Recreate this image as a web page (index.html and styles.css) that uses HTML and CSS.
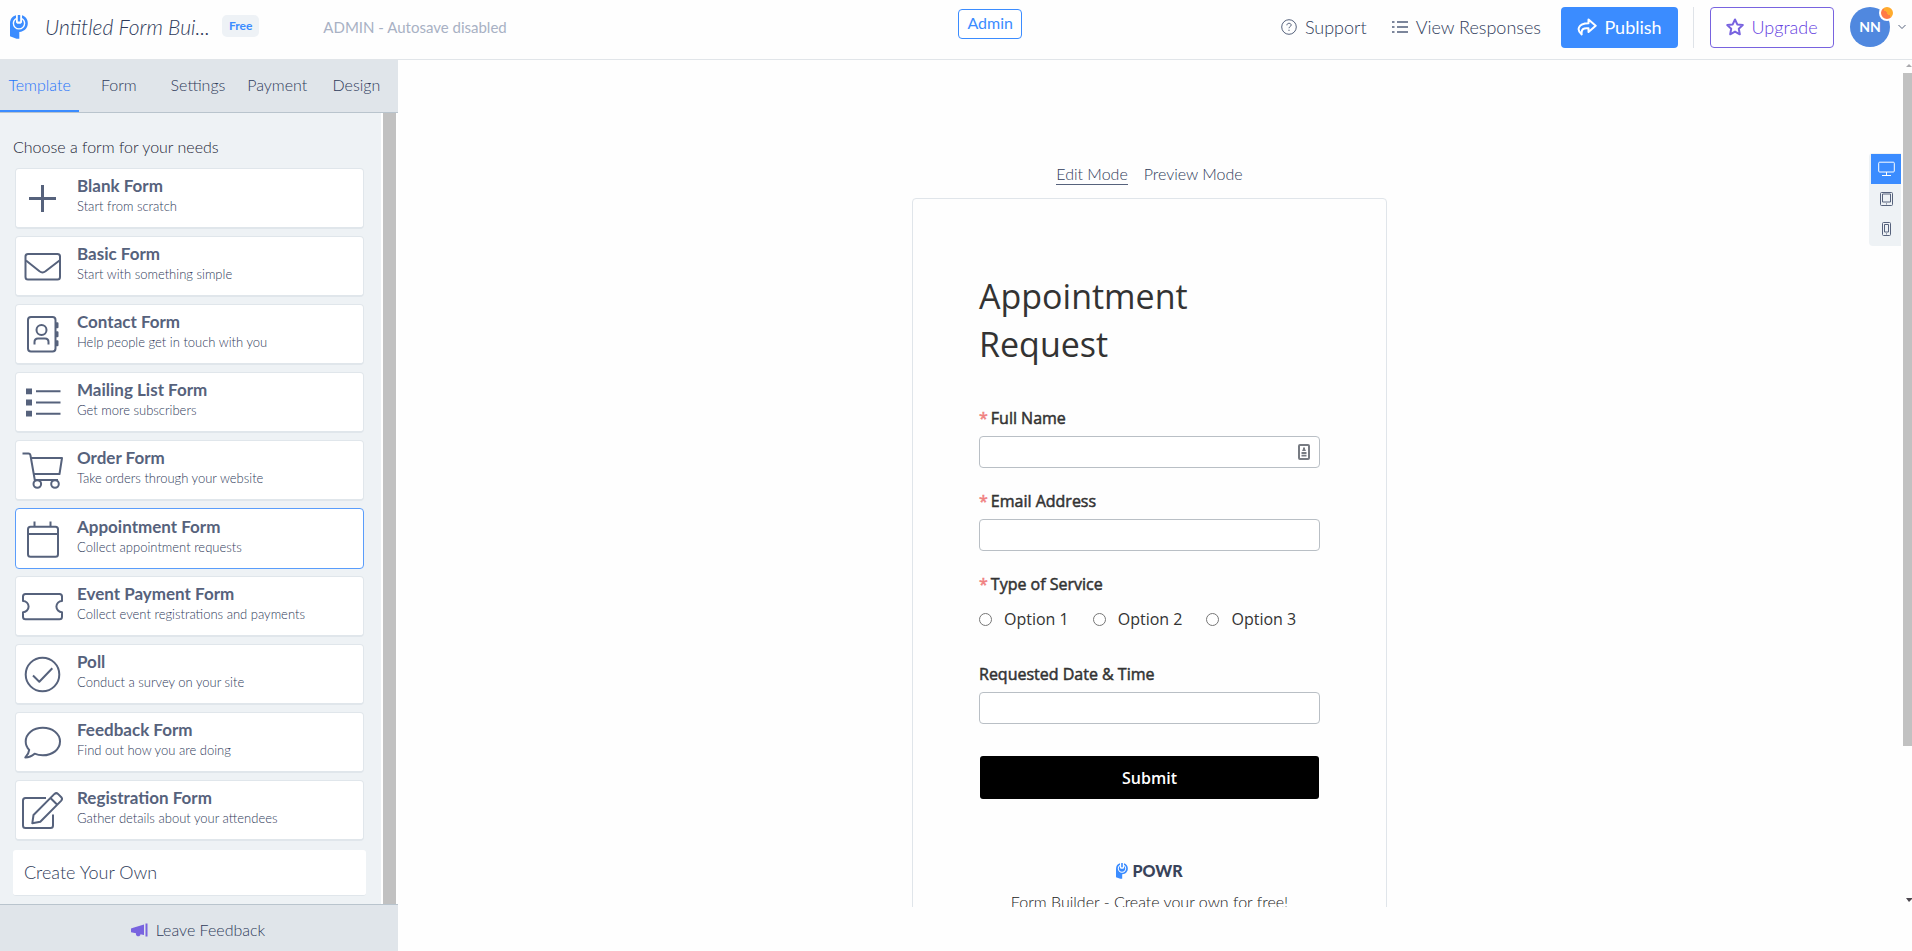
FILE: index.html
```html
<!DOCTYPE html>
<html lang="en">
<head>
<meta charset="utf-8">
<title>Form Builder</title>
<link rel="stylesheet" href="styles.css">
</head>
<body>
<svg class="sprite" aria-hidden="true">
  <symbol id="powr" viewBox="0 0 18 24">
    <path fill="#3b8cff" d="M0 8.500C0 4 2.500 1.200 6 .3V3C3.800 4 2.700 6 2.700 8.300A6.300 6.300 0 0 0 15.300 8.300C15.300 6 14.200 4 12 3V.3C15.600 1.300 17.800 4.500 17.800 8.300C17.800 12.800 14.500 16.600 9.300 17V23.700H6.500L0 21.300Z"/>
    <path fill="#3b8cff" d="M7.800 0H10.200V6.500H7.800ZM6 4.500V7.500L7.300 8.700H10.700L12 7.500V4.500A4.900 4.900 0 1 1 6 4.500Z"/>
  </symbol>
</svg>

<header class="topbar">
  <div class="topbar-left">
    <a class="logo" href="#" aria-label="POWR"><svg class="logo-mark"><use href="#powr"/></svg></a>
    <h1 class="form-name">Untitled Form Bui...</h1>
    <span class="plan">Free</span>
    <span class="autosave">ADMIN - Autosave disabled</span>
  </div>
  <button class="admin" type="button">Admin</button>
  <div class="topbar-right">
    <a class="top-link" href="#"><svg class="icon16" viewBox="0 0 16 16"><circle cx="8" cy="8" r="7.300"/><path d="M5.900 6.300C5.900 5 6.800 4.300 8 4.300S10.200 5 10.200 6.100C10.200 7.500 8 7.600 8 9.200"/><path d="M8 10.700V12"/></svg>Support</a>
    <a class="top-link" href="#"><svg class="icon16 thick" viewBox="0 0 16 16"><path d="M5 3H16M5 8H16M5 13H16M0 3H2.500M0 8H2.500M0 13H2.500"/></svg>View Responses</a>
    <button class="publish" type="button"><svg class="icon20" viewBox="0 0 20 18"><path d="M11.500 1.500L18.700 7.800L11.500 14V10.300C6.500 9.800 4 11 4.700 16.500C-.5 12 .5 5.500 11.500 5.300Z"/></svg>Publish</button>
    <span class="divider"></span>
    <button class="upgrade" type="button"><svg class="icon18" viewBox="0 0 18 18"><path d="M9 1.500L11.300 6.400L16.800 7.100L12.800 10.800L13.800 16.300L9 13.600L4.200 16.300L5.200 10.800L1.200 7.100L6.700 6.400Z"/></svg>Upgrade</button>
    <button class="account" type="button"><span class="avatar">NN<i class="dot"></i></span><svg class="chevron" viewBox="0 0 8 6"><path d="M.5 1L4 4.500L7.500 1"/></svg></button>
  </div>
</header>

<div class="workspace">
  <aside class="sidebar">
    <nav class="tabs">
      <a class="tab active" href="#">Template</a>
      <a class="tab" href="#">Form</a>
      <a class="tab" href="#">Settings</a>
      <a class="tab" href="#">Payment</a>
      <a class="tab" href="#">Design</a>
    </nav>
    <div class="side-body">
      <div class="templates">
        <h2 class="choose">Choose a form for your needs</h2>
        <div class="cards">
          <button class="card" type="button"><svg class="card-icon" viewBox="0 0 40 40"><path class="heavy" d="M20.500 7V34M7 20.500H34"/></svg><span class="card-text"><b>Blank Form</b><small>Start from scratch</small></span></button>
          <button class="card" type="button"><svg class="card-icon" viewBox="0 0 40 40"><rect x="3.500" y="8" width="34.500" height="25.500" rx="2.500"/><path d="M4 14.500L17.500 25.300Q20.500 27.500 23.500 25.300L37.500 14.500"/></svg><span class="card-text"><b>Basic Form</b><small>Start with something simple</small></span></button>
          <button class="card" type="button"><svg class="card-icon" viewBox="0 0 40 40"><rect x="6" y="3" width="27.500" height="34.500" rx="3"/><path d="M34.500 9.300H35.500V13.300H34.500ZM34.500 18.300H35.500V22.300H34.500ZM34.500 27.300H35.500V31.300H34.500Z"/><circle cx="19.500" cy="16" r="5"/><path d="M12.500 30.500V28Q12.500 24.500 16 24.500H23Q26.500 24.500 26.500 28V30.500"/></svg><span class="card-text"><b>Contact Form</b><small>Help people get in touch with you</small></span></button>
          <button class="card" type="button"><svg class="card-icon" viewBox="0 0 40 40"><path d="M14 9.300H38.500M14 20.500H38.500M14 31.700H38.500"/><path class="solid" d="M4 6.500H10V12.300H4ZM4 17.600H10V23.400H4ZM4 28.800H10V34.600H4Z"/></svg><span class="card-text"><b>Mailing List Form</b><small>Get more subscribers</small></span></button>
          <button class="card" type="button"><svg class="card-icon" viewBox="0 0 40 40"><path d="M.5 3.500H6.500Q8 3.500 8.400 5L12.800 30H36M9 8H40L37.500 24H11.800"/><circle cx="15.300" cy="34" r="3.800"/><circle cx="33" cy="34" r="3.800"/></svg><span class="card-text"><b>Order Form</b><small>Take orders through your website</small></span></button>
          <button class="card selected" type="button"><svg class="card-icon" viewBox="0 0 40 40"><rect x="6" y="7.700" width="30" height="30" rx="2.500"/><path d="M6 15H36M12.500 2.500V7.500M28.500 2.500V7.500"/></svg><span class="card-text"><b>Appointment Form</b><small>Collect appointment requests</small></span></button>
          <button class="card" type="button"><svg class="card-icon" viewBox="0 0 40 40"><path d="M3.500 8H37.500Q40 8 40 10.500V15A5.600 5.600 0 0 0 40 26.200V30.700Q40 33.200 37.500 33.200H3.500Q1 33.200 1 30.700V26.200A5.600 5.600 0 0 0 1 15V10.500Q1 8 3.500 8Z"/></svg><span class="card-text"><b>Event Payment Form</b><small>Collect event registrations and payments</small></span></button>
          <button class="card" type="button"><svg class="card-icon" viewBox="0 0 40 40"><circle cx="20.500" cy="20.500" r="16.800"/><path d="M11 21.500L17.300 27.700L30.300 14.300"/></svg><span class="card-text"><b>Poll</b><small>Conduct a survey on your site</small></span></button>
          <button class="card" type="button"><svg class="card-icon" viewBox="0 0 40 40"><path d="M20.800 5.800C30.500 5.800 38 11.800 38 19.600S30.500 33.300 20.800 33.300C17.800 33.300 15 32.700 12.600 31.700C10 34 6.800 35.400 3.300 35.400C5.500 33.200 7 30.500 7.200 27.900C4.900 25.600 3.700 22.700 3.700 19.600C3.700 11.800 11.100 5.800 20.800 5.800Z"/></svg><span class="card-text"><b>Feedback Form</b><small>Find out how you are doing</small></span></button>
          <button class="card" type="button"><svg class="card-icon" viewBox="0 0 40 40"><path d="M24 8H3.500Q1 8 1 10.500V35.500Q1 38 3.500 38H28.500Q31 38 31 35.500V24.500"/><path d="M10.300 33.300L11.500 25L32.500 3.900Q34.300 2.300 36 3.900L39.300 7.200Q40.800 8.900 39.300 10.600L18.300 31.800ZM28.700 8.200L35 14.500"/></svg><span class="card-text"><b>Registration Form</b><small>Gather details about your attendees</small></span></button>
        </div>
        <button class="create" type="button">Create Your Own</button>
      </div>
      <div class="side-scroll"></div>
    </div>
    <a class="feedback" href="#"><svg class="horn" viewBox="0 0 17 14"><path fill="#7863df" d="M0 5.500L3 4.500L13 1.500V12L9.500 11.200C9.300 13 8 13.500 6.500 13.200C5.200 12.800 4.700 11.500 5 10.300L0 9.300ZM14.500 .5H16.500V13.500H14.500Z"/></svg>Leave Feedback</a>
  </aside>

  <main class="stage">
    <div class="canvas">
      <nav class="modes"><a class="mode current" href="#">Edit Mode</a><a class="mode" href="#">Preview Mode</a></nav>
      <form class="preview">
        <h2 class="title">Appointment Request</h2>
        <div class="field">
          <label class="label" for="name"><span class="req">*</span>Full Name</label>
          <div class="input-wrap"><input class="input" id="name" type="text"><svg class="autofill" viewBox="0 0 12 16"><rect x="1" y="1" width="10" height="14" rx="1" fill="#fff" stroke="#777b82" stroke-width="2"/><path fill="#777b82" d="M5 3.500H7V5L8 7H4L5 5ZM3.500 8H8.500V10H3.500ZM3.500 10.700H8.500V12.500H3.500Z"/></svg></div>
        </div>
        <div class="field">
          <label class="label" for="email"><span class="req">*</span>Email Address</label>
          <input class="input" id="email" type="text">
        </div>
        <fieldset class="field group">
          <legend class="label"><span class="req">*</span>Type of Service</legend>
          <div class="options">
            <label class="option"><input class="radio" type="radio" name="service">Option 1</label>
            <label class="option"><input class="radio" type="radio" name="service">Option 2</label>
            <label class="option"><input class="radio" type="radio" name="service">Option 3</label>
          </div>
        </fieldset>
        <div class="field">
          <label class="label" for="date">Requested Date &amp; Time</label>
          <input class="input" id="date" type="text">
        </div>
        <button class="submit" type="button">Submit</button>
        <a class="brand" href="#"><svg class="brand-mark"><use href="#powr"/></svg>POWR</a>
        <a class="promo" href="#">Form Builder - Create your own for free!</a>
      </form>
    </div>
    <div class="page-scroll">
      <svg class="arrow" viewBox="0 0 9 13"><path fill="#a9a9ad" d="M3 7L6 4L9 7Z"/></svg>
      <div class="track"><div class="thumb"></div></div>
      <svg class="arrow" viewBox="0 0 9 13"><path fill="#4d484f" d="M3 4H9V5L6 8Z"/></svg>
    </div>
    <div class="devices">
      <button class="device on" type="button" aria-label="Desktop"><svg viewBox="0 0 17 16"><rect x=".7" y="1.200" width="15.600" height="9.800" rx="1"/><path d="M8.500 11V14.300M4 14.500H13"/></svg></button>
      <button class="device" type="button" aria-label="Tablet"><svg viewBox="0 0 17 16"><rect x="2.500" y="1.500" width="12" height="13" rx="1"/><rect x="4.500" y="3" width="8" height="8"/><path d="M8 12.900H9"/></svg></button>
      <button class="device" type="button" aria-label="Phone"><svg viewBox="0 0 17 16"><rect x="4.500" y="1.500" width="8" height="13" rx="1"/><rect x="6.500" y="3.500" width="4" height="7.500"/><path d="M8 12.900H9"/></svg></button>
    </div>
  </main>
</div>
</body>
</html>
```
FILE: styles.css
```css
* { box-sizing: border-box; }
body {
  margin: 0;
  height: 100vh;
  display: flex;
  flex-direction: column;
  overflow: hidden;
  background: #fefefe;
  color: #2f3b5a;
  font: 300 16px/20px Lato, "Open Sans", sans-serif;
}
a { color: inherit; text-decoration: none; }
button { font: inherit; color: inherit; margin: 0; padding: 0; cursor: pointer; }
h1, h2 { margin: 0; font-weight: 300; }
svg { flex: none; fill: none; stroke-linejoin: round; }
.sprite { display: none; }

/* Top bar */
.topbar {
  flex: none;
  display: grid;
  grid-template-columns: 14fr auto 13fr;
  height: 60px;
  border-bottom: 1px solid #e1e5e9;
}
.topbar-left, .topbar-right { display: flex; align-items: center; height: 54px; min-width: 0; }
.topbar-left { padding-left: 10px; }
.logo { display: flex; margin-right: 17px; }
.logo-mark { width: 18px; height: 24px; }
.form-name { font-size: 21px; line-height: 28px; font-style: italic; white-space: nowrap; }
.plan {
  margin: 0 64px 2px 12px;
  padding: 0 7px;
  border-radius: 5px;
  background: #eef2f6;
  color: #3b8cff;
  font-size: 12px;
  font-weight: 700;
  line-height: 22px;
}
.autosave { color: #a8b1c4; font-size: 15px; font-weight: 400; }
.admin {
  width: 64px;
  height: 30px;
  margin-top: 9px;
  padding-bottom: 2px;
  border: 1px solid #3b8cff;
  border-radius: 4px;
  background: #fff;
  color: #3b8cff;
  font-weight: 400;
}
.topbar-right { justify-content: flex-end; padding-right: 6px; font-size: 18px; }
.top-link { display: flex; align-items: center; gap: 8px; margin-right: 25px; white-space: nowrap; }
.top-link + .top-link { margin-right: 20px; }
.icon16 { width: 16px; height: 16px; stroke: #56627c; }
.thick { stroke-width: 2; stroke: #7c869b; }
.publish, .upgrade { display: flex; align-items: center; justify-content: center; height: 41px; border-radius: 4px; }
.publish { width: 117px; gap: 7px; border: 0; background: #3b8cff; color: #fff; font-weight: 400; }
.icon20 { width: 20px; height: 18px; stroke: #fff; stroke-width: 2; }
.divider { width: 1px; height: 41px; margin: 0 16px 0 15px; background: #dfe3e8; }
.upgrade { width: 124px; gap: 7px; border: 1px solid #7863df; background: #fff; color: #6440e0; }
.icon18 { width: 18px; height: 18px; stroke: #7863df; stroke-width: 2; }
.account { display: flex; align-items: center; gap: 8px; margin-left: 16px; border: 0; background: none; }
.avatar {
  position: relative;
  width: 40px;
  border-radius: 50%;
  background: #5088df;
  color: #fff;
  font-size: 14px;
  font-weight: 700;
  line-height: 40px;
}
.dot {
  position: absolute;
  top: -2px;
  right: -5px;
  width: 16px;
  height: 16px;
  border: 2px solid #fff;
  border-radius: 50%;
  background: linear-gradient(45deg, #ff7a45 50%, #ffab2d 50%);
}
.chevron { width: 8px; height: 6px; stroke: #56627c; }

/* Sidebar */
.workspace { flex: 1; min-height: 0; display: flex; }
.sidebar { flex: none; width: 398px; display: flex; flex-direction: column; }
.tabs { display: grid; grid-template-columns: repeat(5, 1fr); padding-right: 2px; border-bottom: 1px solid #b9c4cd; background: #e0e5ea; }
.tab { height: 52px; line-height: 50px; text-align: center; }
.active { border-bottom: 2px solid #3b8cff; color: #1f74fa; }
.side-body { flex: 1; min-height: 0; display: flex; background: #fff; }
.templates { flex: 1; padding: 24px 15px 8px 13px; background: #eef2f5; overflow: hidden; }
.side-scroll { width: 13px; margin: 0 2px; background: #c1c1c1; }
.choose { color: #1c2536; font-size: 16px; line-height: 20px; margin-bottom: 11px; }
.cards { display: flex; flex-direction: column; gap: 7px; padding: 0 2px; }
.card {
  display: flex;
  align-items: center;
  height: 61px;
  padding: 0 6px;
  border: 1px solid #e0e6eb;
  border-bottom-width: 2px;
  border-radius: 4px;
  background: #fff;
  text-align: left;
}
.selected { border: 1px solid #5a9dfb; }
.card-icon { width: 40px; height: 40px; margin-right: 15px; overflow: visible; stroke: #56627c; stroke-width: 2; }
.heavy { stroke-width: 3; }
.solid { fill: #56627c; stroke: none; }
.card-text { display: flex; flex-direction: column; padding-bottom: 4px; }
.card b { font-size: 17px; line-height: 20px; color: #56627c; font-weight: 700; }
.card small { font-size: 13px; line-height: 20px; }
.create {
  display: block;
  width: 100%;
  height: 46px;
  margin-top: 9px;
  padding: 0 11px 2px;
  border: 0;
  border-bottom: 1px solid #e0e6eb;
  border-radius: 3px;
  background: #fff;
  font-size: 18px;
  text-align: left;
}
.feedback {
  flex: none;
  display: flex;
  align-items: center;
  justify-content: center;
  gap: 8px;
  height: 47px;
  padding: 4px 2px 0 0;
  border-top: 1px solid #b9c4cd;
  background: #e0e5ea;
}
.horn { width: 17px; height: 14px; }

/* Stage */
.stage { position: relative; flex: 1; min-width: 0; display: flex; margin-bottom: 44px; }
.canvas {
  flex: 1;
  display: flex;
  flex-direction: column;
  align-items: center;
  padding-top: 104px;
  overflow: hidden;
}
.modes { display: flex; gap: 16px; margin-bottom: 13px; }
.mode { line-height: 20px; border-bottom: 1px solid transparent; }
.current { border-color: #56627c; }
.preview {
  flex: none;
  display: flex;
  flex-direction: column;
  width: 475px;
  min-height: 760px;
  padding: 73px 66px;
  border: 1px solid #e0e5ea;
  border-radius: 4px;
  color: #333;
  font-family: "Open Sans", sans-serif;
  font-weight: 400;
}
.title { font-size: 34px; font-weight: 400; line-height: 48px; margin-bottom: 39px; }
.field { margin: 0 0 22px; padding: 0; border: 0; min-width: 0; }
.label { display: block; padding: 0; margin-bottom: 7px; line-height: 22px; -webkit-text-stroke: 0.5px; }
.req { color: #f08080; margin-right: 3px; }
.input-wrap { position: relative; }
.input { display: block; width: 100%; height: 32px; border: 1px solid #b9bfc5; border-radius: 4px; background: #fff; }
.autofill { position: absolute; top: 8px; right: 10px; width: 12px; height: 16px; }
.options { display: flex; gap: 24px; padding-top: 6px; line-height: 22px; }
.group { margin-bottom: 33px; }
.option { display: flex; align-items: center; }
.radio { width: 13px; height: 13px; margin: 0 12px 0 0; }
.submit {
  height: 43px;
  margin: 10px 1px 62px;
  border: 0;
  border-radius: 3px;
  background: #000;
  color: #fff;
  font-family: "Open Sans", sans-serif;
  font-weight: 600;
}
.brand, .promo { align-self: center; font-family: Lato, sans-serif; }
.brand { display: flex; align-items: center; gap: 4px; color: #39435a; font-weight: 900; margin-bottom: 11px; }
.brand-mark { width: 12px; height: 16px; }
.promo { color: #222; font-weight: 300; }

.page-scroll { flex: none; display: flex; flex-direction: column; width: 11px; padding-left: 2px; }
.arrow { width: 9px; height: 13px; }
.track { flex: 1; }
.thumb { height: 82%; background: #c1c1c1; }
.devices {
  position: absolute;
  top: 93px;
  right: 11px;
  padding: 1px 0 2px 2px;
  border-radius: 4px 0 0 4px;
  background: #eef2f5;
}
.device { display: flex; align-items: center; justify-content: center; width: 30px; height: 30px; border: 0; background: none; stroke: #56627c; }
.device svg { width: 17px; height: 16px; }
.on { background: #3b8cff; stroke: #fff; }
```
